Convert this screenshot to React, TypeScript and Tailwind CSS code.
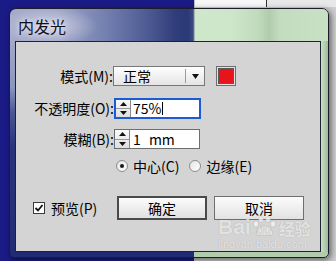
import React from "react";

function SpinButtons() {
  return (
    <div className="flex flex-col w-[15px] h-full border-r border-[#8a8a8a] bg-linear-to-b from-[#fafafa] to-[#dedede]">
      <div className="flex-1 flex items-center justify-center border-b border-[#9a9a9a]">
        <svg width="7" height="4" viewBox="0 0 7 4"><path d="M3.5 0L7 4H0z" fill="#111" /></svg>
      </div>
      <div className="flex-1 flex items-center justify-center">
        <svg width="7" height="4" viewBox="0 0 7 4"><path d="M0 0H7L3.5 4z" fill="#111" /></svg>
      </div>
    </div>
  );
}

function Radio({ checked }: { checked?: boolean }) {
  return (
    <div className="w-[12px] h-[12px] rounded-full border border-[#8c8c8c] bg-linear-to-br from-[#e4e4e4] to-[#ffffff] flex items-center justify-center">
      {checked && <div className="w-[4px] h-[4px] rounded-full bg-[#1a1a1a]" />}
    </div>
  );
}

export default function App() {
  return (
    <div className="relative w-[336px] h-[261px] overflow-hidden bg-[#1b1b87] font-['Noto_Sans_CJK_SC',sans-serif] text-black">
      {/* window behind the dialog */}
      <div className="absolute left-[194px] top-0 right-0 bottom-0 bg-[#cfcfcf]">
        <div className="flex h-[7px]">
          <div className="w-[73px] bg-[#f7f7f7] border-l border-[#bdbdbd] border-r border-r-[#303030]" />
          <div className="flex-1 bg-[#e8e8e8]" />
        </div>
      </div>

      {/* dialog */}
      <div className="relative ml-[9px] mt-[8px] w-[320px] h-[250px] flex flex-col overflow-hidden rounded-t-[7px] rounded-b-[5px] border border-[#1c1c2c] shadow-[2px_2px_6px_rgba(0,0,0,0.55)] bg-[linear-gradient(90deg,#1f2b72_0%,#1f2b72_57.9%,#b0ccac_58%,#b0ccac_100%)]">
        {/* title bar */}
        <div className="h-[32px] shrink-0 flex items-center pl-[8px] pt-[2px] bg-[radial-gradient(ellipse_48px_20px_at_40px_17px,rgba(214,217,232,0.85),rgba(214,217,232,0)),linear-gradient(90deg,#a6abc9_0%,#9aa1c4_15%,#7480b0_30%,#4b5991_44%,#303d7b_52%,#2c3978_56%,#3c4b80_57.6%,#cfe8cb_58.2%,#cde6c9_70%,#c0dabc_78%,#b1ccad_81.5%,#c3dcbf_85%,#c8e0c4_100%)]">
          <span className="text-[16px] leading-none text-[#10101c] [text-shadow:0_0_5px_rgba(255,255,255,0.9)]">内发光</span>
        </div>

        {/* middle */}
        <div className="flex flex-1">
          <div className="w-[5px] bg-[linear-gradient(180deg,#a3a9c8_0%,#8c95c0_22%,#4a5792_34%,#27347b_50%,#222e74_100%)]" />
          <div className="w-[306px] h-[211px] border border-[#1e2236] bg-[#d4d4d4] flex flex-col pt-[24px] text-[14px] leading-none">
            {/* row 1 */}
            <div className="flex items-center h-[20px]">
              <div className="w-[97px] text-right">模式(M):</div>
              <div className="w-[92px] h-[20px] border border-[#777] bg-linear-to-b from-[#ffffff] to-[#e4e4e4] flex items-center">
                <span className="flex-1 pl-[9px]">正常</span>
                <div className="w-px h-[14px] bg-[#9c9c9c]" />
                <div className="w-[18px] flex items-center justify-center">
                  <svg width="7" height="5" viewBox="0 0 7 5"><path d="M0 0H7L3.5 5z" fill="#111" /></svg>
                </div>
              </div>
              <div className="ml-[11px] w-[20px] h-[20px] border border-[#6e6e6e] bg-[#e2e2e2] p-[1px]">
                <div className="w-full h-full border border-[#5a5a5a] bg-[#e8141c]" />
              </div>
            </div>

            {/* row 2 */}
            <div className="flex items-center h-[20px] mt-[12px]">
              <div className="w-[98px] text-right">不透明度(O):</div>
              <div className="w-[87px] h-[21px] border-2 border-[#1d5bd4] bg-white flex items-stretch">
                <SpinButtons />
                <div className="flex items-center pl-[2px]">
                  <span>75%</span>
                  <span className="ml-[1px] w-px h-[13px] bg-black" />
                </div>
              </div>
            </div>

            {/* row 3 */}
            <div className="flex items-center h-[20px] mt-[11px]">
              <div className="w-[98px] text-right">模糊(B):</div>
              <div className="w-[86px] h-[20px] border border-[#6e6e6e] bg-white flex items-stretch">
                <SpinButtons />
                <div className="flex items-center pl-[3px] [word-spacing:5px]">1 mm</div>
              </div>
            </div>

            {/* radio row */}
            <div className="flex items-center h-[12px] mt-[11px] pl-[100px]">
              <Radio checked />
              <span className="ml-[5px]">中心(C)</span>
              <div className="ml-[10px]"><Radio /></div>
              <span className="ml-[5px]">边缘(E)</span>
            </div>

            {/* bottom row */}
            <div className="flex items-center h-[24px] mt-[24px] pl-[17px]">
              <div className="w-[84px] flex items-center">
                <div className="w-[12px] h-[12px] border border-[#3a3a3a] bg-white flex items-center justify-center">
                  <svg width="10" height="10" viewBox="0 0 10 10"><path d="M1.5 5L4 7.5L8.5 2" stroke="#111" strokeWidth="1.8" fill="none" /></svg>
                </div>
                <span className="ml-[6px]">预览(P)</span>
              </div>
              <button className="w-[90px] h-[24px] border-2 border-[#4a4a4a] bg-linear-to-b from-[#fcfcfc] to-[#e0e0e0] flex items-center justify-center">确定</button>
              <button className="ml-[7px] w-[90px] h-[24px] border border-[#6e6e6e] bg-linear-to-b from-[#fcfcfc] to-[#e2e2e2] flex items-center justify-center">取消</button>
            </div>
          </div>
          <div className="w-[7px] bg-linear-to-r from-[#c9e1c5] to-[#9fbb9b]" />
        </div>
        <div className="h-[5px] shrink-0" />
      </div>

      {/* watermark */}
      <div className="absolute left-[218px] top-[216px] flex flex-col text-white/70 [text-shadow:0_0_1px_rgba(0,0,0,0.25)]">
        <div className="flex items-end h-[21px]">
          <span className="font-['Liberation_Sans',sans-serif] font-bold text-[21px] leading-none">Bai</span>
          <span className="relative w-[28px] h-[21px]">
            <svg width="28" height="21" viewBox="0 0 28 21" className="absolute left-0 top-0">
              <g fill="rgba(255,255,255,0.6)" stroke="rgba(0,0,0,0.15)" strokeWidth="0.7">
                <ellipse cx="5" cy="8" rx="2.5" ry="3" />
                <ellipse cx="10" cy="3.5" rx="2.5" ry="2.6" />
                <ellipse cx="17" cy="3.5" rx="2.5" ry="2.6" />
                <ellipse cx="22" cy="8" rx="2.5" ry="3" />
                <path d="M6 19C4 15 9 10 13.5 10S23 15 21 19Z" />
              </g>
            </svg>
            <span className="absolute left-[6px] top-[8px] font-['Liberation_Sans',sans-serif] font-bold text-[12px] leading-none text-[#dcdcdc]">du</span>
          </span>
          <span className="font-bold text-[16px] leading-none mb-[1px]">经验</span>
        </div>
        <span className="mt-[2px] font-['Liberation_Sans',sans-serif] text-[11px] leading-none">jingyan.baidu.com</span>
      </div>
    </div>
  );
}
